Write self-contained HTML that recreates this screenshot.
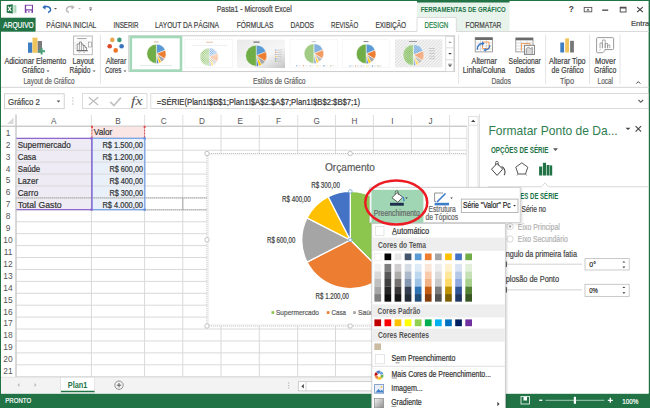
<!DOCTYPE html><html><head><meta charset="utf-8"><style>html,body{margin:0;padding:0;background:#fff;overflow:hidden}svg{display:block}text{font-family:"Liberation Sans",sans-serif}</style></head><body>
<svg width="650" height="408" viewBox="0 0 650 408">
<rect x="0" y="0" width="650" height="408" fill="#fff" />
<path d="M6.7,5 L12.8,4.2 V13.6 L6.7,12.8 Z" fill="#1e7044" />
<rect x="12.8" y="5.1" width="3.6" height="7.6" fill="#a9d6b9" />
<line x1="13.9" y1="5.3" x2="13.9" y2="12.5" stroke="#fff" stroke-width="0.6" />
<path d="M8.1,6.6 L11.2,11.1 M11.2,6.6 L8.1,11.1" fill="none" stroke="#fff" stroke-width="1.1" />
<rect x="24.8" y="4.8" width="8.2" height="8.1" fill="#7b3fa6" />
<rect x="26.1" y="5.7" width="5.8" height="3.6" fill="#fff" />
<rect x="26.5" y="10.5" width="5" height="2.4" fill="#fff" />
<rect x="28.4" y="10.9" width="1.1" height="1.6" fill="#7b3fa6" />
<path d="M44,7 q5,-1.5 6.5,2 q0.5,2.5 -2.5,3.5" fill="none" stroke="#2e6bb8" stroke-width="1.4" />
<path d="M42.3,7.2 l3.2,-2.5 v5 z" fill="#2e6bb8" />
<path d="M54,8 h3 l-1.5,1.6z" fill="#555" />
<path d="M73,7 q-5,-1.5 -6.5,2 q-0.5,2.5 2.5,3.5" fill="none" stroke="#b8b8b8" stroke-width="1.4" />
<path d="M74.7,7.2 l-3.2,-2.5 v5 z" fill="#b8b8b8" />
<path d="M78,8 h3 l-1.5,1.6z" fill="#bbb" />
<rect x="89.3" y="7.5" width="2.6" height="0.9" fill="#555" />
<path d="M89.2,9.3 h2.8 l-1.4,1.5z" fill="#555" />
<text x="216.7" y="12.3" font-size="8.87" fill="#444" stroke="#444" stroke-width="0.2" textLength="75" lengthAdjust="spacingAndGlyphs" >Pasta1 - Microsoft Excel</text>
<rect x="417" y="0" width="92.5" height="31" fill="#e8f3eb" />
<rect x="417" y="0" width="92.5" height="2.5" fill="#217346" />
<text x="420.7" y="12.1" font-size="6.98" fill="#217346" font-weight="600" textLength="85" lengthAdjust="spacingAndGlyphs" >FERRAMENTAS DE GRÁFICO</text>
<text x="568.8" y="11.9" font-size="8.4" font-weight="700" fill="#444">?</text>
<rect x="584.2" y="7.4" width="7.6" height="4.4" fill="none" stroke="#555" stroke-width="0.9"/>
<path d="M586.3,10.4 l1.7,-1.8 l1.7,1.8z" fill="#555" />
<rect x="602.2" y="9.5" width="6" height="1.3" fill="#444" />
<rect x="620.2" y="7.2" width="5.8" height="4.8" fill="none" stroke="#444" stroke-width="0.9"/>
<rect x="620.2" y="7.2" width="5.8" height="1.3" fill="#444" />
<path d="M637.2,7.2 L642.8,12 M642.8,7.2 L637.2,12" fill="none" stroke="#444" stroke-width="1.1" />
<text x="630.9" y="25.6" font-size="7.56" fill="#444" stroke="#444" stroke-width="0.2" textLength="21" lengthAdjust="spacingAndGlyphs" >Entrar</text>
<rect x="0" y="0" width="650" height="1" fill="#217346" />
<rect x="0" y="0" width="1" height="408" fill="#217346" />
<rect x="648.6" y="0" width="1.4" height="408" fill="#217346" />
<rect x="0" y="17.7" width="35.6" height="14" fill="#217346" />
<text x="3.3" y="27.7" font-size="8.28" fill="#fff" stroke="#fff" stroke-width="0.2" textLength="30.4" lengthAdjust="spacingAndGlyphs" >ARQUIVO</text>
<text x="46.3" y="27.7" font-size="8.28" fill="#444" stroke="#444" stroke-width="0.2" textLength="50" lengthAdjust="spacingAndGlyphs" >PÁGINA INICIAL</text>
<text x="113.5" y="27.7" font-size="8.28" fill="#444" stroke="#444" stroke-width="0.2" textLength="25" lengthAdjust="spacingAndGlyphs" >INSERIR</text>
<text x="155" y="27.7" font-size="8.28" fill="#444" stroke="#444" stroke-width="0.2" textLength="64" lengthAdjust="spacingAndGlyphs" >LAYOUT DA PÁGINA</text>
<text x="236.8" y="27.7" font-size="8.28" fill="#444" stroke="#444" stroke-width="0.2" textLength="36.5" lengthAdjust="spacingAndGlyphs" >FÓRMULAS</text>
<text x="290.5" y="27.7" font-size="8.28" fill="#444" stroke="#444" stroke-width="0.2" textLength="23.5" lengthAdjust="spacingAndGlyphs" >DADOS</text>
<text x="331" y="27.7" font-size="8.28" fill="#444" stroke="#444" stroke-width="0.2" textLength="27.2" lengthAdjust="spacingAndGlyphs" >REVISÃO</text>
<text x="375.4" y="27.7" font-size="8.28" fill="#444" stroke="#444" stroke-width="0.2" textLength="30.8" lengthAdjust="spacingAndGlyphs" >EXIBIÇÃO</text>
<rect x="417" y="17.5" width="39.3" height="15" fill="#fff" />
<path d="M417,32 V17.5 H456.3 V32" fill="none" stroke="#d4d4d4" stroke-width="0.8" />
<text x="424.4" y="27.7" font-size="8.28" fill="#1e8544" stroke="#1e8544" stroke-width="0.2" textLength="24" lengthAdjust="spacingAndGlyphs" >DESIGN</text>
<text x="465.5" y="27.7" font-size="8.28" fill="#444" stroke="#444" stroke-width="0.2" textLength="35.8" lengthAdjust="spacingAndGlyphs" >FORMATAR</text>
<line x1="35.6" y1="31.5" x2="417" y2="31.5" stroke="#d6d6d6" stroke-width="0.9" />
<line x1="456.3" y1="31.5" x2="649" y2="31.5" stroke="#d6d6d6" stroke-width="0.9" />
<rect x="417.4" y="31" width="38.5" height="1.5" fill="#fff" />
<line x1="1" y1="87.3" x2="649" y2="87.3" stroke="#d4d4d4" stroke-width="1" />
<line x1="100.4" y1="34.5" x2="100.4" y2="84" stroke="#e1e1e1" stroke-width="0.9" />
<line x1="458.6" y1="34.5" x2="458.6" y2="84" stroke="#e1e1e1" stroke-width="0.9" />
<line x1="545.6" y1="34.5" x2="545.6" y2="84" stroke="#e1e1e1" stroke-width="0.9" />
<line x1="589.6" y1="34.5" x2="589.6" y2="84" stroke="#e1e1e1" stroke-width="0.9" />
<line x1="620" y1="34.5" x2="620" y2="84" stroke="#e1e1e1" stroke-width="0.9" />
<rect x="28" y="42.5" width="4.3" height="10.3" fill="#3d7fc2" />
<rect x="32.5" y="37.6" width="5" height="15.2" fill="#f2c55c" />
<rect x="37.7" y="41" width="4.3" height="11.8" fill="#7b7b7b" />
<path d="M41.6,47.8 v6.8 M38.2,51.2 h6.8" fill="none" stroke="#4aa27a" stroke-width="2" />
<text x="4.4" y="64" font-size="8.14" fill="#444" stroke="#444" stroke-width="0.2" textLength="61.8" lengthAdjust="spacingAndGlyphs" >Adicionar Elemento</text>
<text x="22" y="73.4" font-size="8.14" fill="#444" stroke="#444" stroke-width="0.2" textLength="22.5" lengthAdjust="spacingAndGlyphs" >Gráfico</text>
<path d="M46.5,70.6 h3 l-1.5,1.5z" fill="#555" />
<text x="23.5" y="84.4" font-size="8.14" fill="#666" stroke="#666" stroke-width="0.2" textLength="51" lengthAdjust="spacingAndGlyphs" >Layout de Gráfico</text>
<rect x="73.6" y="36" width="18.7" height="18.7" fill="#fff" stroke="#b4b4b4" stroke-width="0.9"/>
<line x1="77.2" y1="38.6" x2="86.6" y2="38.6" stroke="#8a8a8a" stroke-width="0.8" />
<line x1="76.3" y1="41" x2="88" y2="41" stroke="#e0e0e0" stroke-width="0.5" />
<line x1="76.3" y1="43.5" x2="88" y2="43.5" stroke="#e0e0e0" stroke-width="0.5" />
<line x1="76.3" y1="46" x2="88" y2="46" stroke="#e0e0e0" stroke-width="0.5" />
<line x1="76.3" y1="48.5" x2="88" y2="48.5" stroke="#e0e0e0" stroke-width="0.5" />
<line x1="74.5" y1="43" x2="75.8" y2="43" stroke="#999" stroke-width="0.5" />
<line x1="74.5" y1="45.5" x2="75.8" y2="45.5" stroke="#999" stroke-width="0.5" />
<line x1="74.5" y1="48" x2="75.8" y2="48" stroke="#999" stroke-width="0.5" />
<path d="M77.2,50.5 V44 H79.5 V42 H81.5 V44 H83 V45.5 H85 V47.5 H86.5 V50.5 Z" fill="#f4f4f4" stroke="#6f6f6f" stroke-width="0.7" />
<line x1="79.5" y1="44" x2="79.5" y2="50.5" stroke="#6f6f6f" stroke-width="0.5" />
<line x1="81.5" y1="44" x2="81.5" y2="50.5" stroke="#6f6f6f" stroke-width="0.5" />
<line x1="83.5" y1="45.5" x2="83.5" y2="50.5" stroke="#6f6f6f" stroke-width="0.5" />
<line x1="76.5" y1="50.8" x2="88" y2="50.8" stroke="#555" stroke-width="0.8" />
<rect x="88.5" y="42" width="2.8" height="5" fill="#fff" stroke="#888" stroke-width="0.6"/>
<line x1="78.5" y1="52.6" x2="80.5" y2="52.6" stroke="#aaa" stroke-width="0.6" />
<line x1="83" y1="52.6" x2="85" y2="52.6" stroke="#aaa" stroke-width="0.6" />
<text x="72.5" y="63.8" font-size="8.14" fill="#444" stroke="#444" stroke-width="0.2" textLength="21.3" lengthAdjust="spacingAndGlyphs" >Layout</text>
<text x="69.6" y="73.4" font-size="8.14" fill="#444" stroke="#444" stroke-width="0.2" textLength="20.8" lengthAdjust="spacingAndGlyphs" >Rápido</text>
<path d="M92.6,70.6 h3 l-1.5,1.5z" fill="#555" />
<circle cx="112.3" cy="39.9" r="2.3" fill="#eaa84e"/>
<circle cx="119.4" cy="39.9" r="2.3" fill="#3f9a7c"/>
<circle cx="109.7" cy="46.3" r="2.3" fill="#dc4a2a"/>
<circle cx="121.6" cy="46.3" r="2.3" fill="#3a72c0"/>
<circle cx="115.7" cy="50.4" r="2.3" fill="#ec7424"/>
<text x="105.9" y="63.8" font-size="8.14" fill="#444" stroke="#444" stroke-width="0.2" textLength="20.3" lengthAdjust="spacingAndGlyphs" >Alterar</text>
<text x="104.9" y="73.4" font-size="8.14" fill="#444" stroke="#444" stroke-width="0.2" textLength="16.5" lengthAdjust="spacingAndGlyphs" >Cores</text>
<path d="M123.5,70.6 h3 l-1.5,1.5z" fill="#555" />
<rect x="128.8" y="35.8" width="325.8" height="35.8" fill="#fff" stroke="#c6c6c6" stroke-width="0.9"/>
<rect x="130.8" y="37" width="50.2" height="33.6" fill="#fff" stroke="#a3d9b9" stroke-width="2.6"/>
<path d="M156.4,53.8 L156.40,44.20 A9.6,9.6 0 0 1 165.27,50.13 Z" fill="#5b9bd5" stroke="#fff" stroke-width="0.5" stroke-linejoin="round"/>
<path d="M156.4,53.8 L165.27,50.13 A9.6,9.6 0 0 1 164.59,58.82 Z" fill="#ed7d31" stroke="#fff" stroke-width="0.5" stroke-linejoin="round"/>
<path d="M156.4,53.8 L164.59,58.82 A9.6,9.6 0 0 1 161.42,61.99 Z" fill="#a5a5a5" stroke="#fff" stroke-width="0.5" stroke-linejoin="round"/>
<path d="M156.4,53.8 L161.42,61.99 A9.6,9.6 0 0 1 158.64,63.13 Z" fill="#ffc000" stroke="#fff" stroke-width="0.5" stroke-linejoin="round"/>
<path d="M156.4,53.8 L158.64,63.13 A9.6,9.6 0 0 1 156.40,63.40 Z" fill="#4472c4" stroke="#fff" stroke-width="0.5" stroke-linejoin="round"/>
<path d="M156.4,53.8 L156.40,63.40 A9.6,9.6 0 0 1 156.40,44.20 Z" fill="#70ad47" stroke="#fff" stroke-width="0.5" stroke-linejoin="round"/>
<rect x="154" y="41.6" width="4.5" height="0.8" fill="#c8a080" />
<rect x="140" y="65.2" width="32" height="0.7" fill="#dcdcdc" />
<rect x="184.9" y="39.3" width="47.8" height="28.4" fill="#fff" stroke="#dcdcdc" stroke-width="0.6" stroke-dasharray="1,1"/>
<defs><pattern id="hat" width="2" height="2" patternUnits="userSpaceOnUse" patternTransform="rotate(45)"><rect width="2" height="2" fill="#fff"/><rect width="1" height="2" fill="#000" fill-opacity="0.35"/></pattern><pattern id="hat2" width="2.2" height="2.2" patternUnits="userSpaceOnUse" patternTransform="rotate(45)"><rect width="2.2" height="2.2" fill="#f4f4f4"/><rect width="0.8" height="2.2" fill="#dddddd"/></pattern><linearGradient id="g3" x1="0" y1="0" x2="1" y2="1"><stop offset="0" stop-color="#e9e9e9"/><stop offset="0.6" stop-color="#f6f6f6"/><stop offset="1" stop-color="#c4c4c4"/></linearGradient></defs>
<path d="M209.1,57 L209.10,48.00 A9,9 0 0 1 217.41,53.56 Z" fill="#86b3e0" stroke="#fff" stroke-width="0.3" stroke-linejoin="round"/>
<path d="M209.1,57 L217.41,53.56 A9,9 0 0 1 216.77,61.70 Z" fill="#f19c64" stroke="#fff" stroke-width="0.3" stroke-linejoin="round"/>
<path d="M209.1,57 L216.77,61.70 A9,9 0 0 1 213.80,64.67 Z" fill="#bcbcbc" stroke="#fff" stroke-width="0.3" stroke-linejoin="round"/>
<path d="M209.1,57 L213.80,64.67 A9,9 0 0 1 211.20,65.75 Z" fill="#ffcc40" stroke="#fff" stroke-width="0.3" stroke-linejoin="round"/>
<path d="M209.1,57 L211.20,65.75 A9,9 0 0 1 209.10,66.00 Z" fill="#6f93d2" stroke="#fff" stroke-width="0.3" stroke-linejoin="round"/>
<path d="M209.1,57 L209.10,66.00 A9,9 0 0 1 209.10,48.00 Z" fill="#8fc26a" stroke="#fff" stroke-width="0.3" stroke-linejoin="round"/>
<defs><pattern id="xh" width="1.6" height="1.6" patternUnits="userSpaceOnUse" patternTransform="rotate(45)"><rect width="1.6" height="0.6" fill="#fff"/><rect width="0.6" height="1.6" fill="#fff"/></pattern></defs>
<circle cx="209.1" cy="57" r="9.2" fill="url(#xh)" fill-opacity="0.8"/>
<rect x="206" y="41.8" width="7" height="0.8" fill="#e0b090" />
<rect x="192" y="45.3" width="35" height="0.6" fill="#e4e4e4" />
<rect x="237" y="39.6" width="48" height="28.4" fill="url(#g3)" />
<path d="M256.2,55.7 L256.20,45.20 A10.5,10.5 0 0 1 265.90,51.68 Z" fill="#5b9bd5" stroke="#fff" stroke-width="0.4" stroke-linejoin="round"/>
<path d="M256.2,55.7 L265.90,51.68 A10.5,10.5 0 0 1 265.15,61.19 Z" fill="#ed7d31" stroke="#fff" stroke-width="0.4" stroke-linejoin="round"/>
<path d="M256.2,55.7 L265.15,61.19 A10.5,10.5 0 0 1 261.69,64.65 Z" fill="#a5a5a5" stroke="#fff" stroke-width="0.4" stroke-linejoin="round"/>
<path d="M256.2,55.7 L261.69,64.65 A10.5,10.5 0 0 1 258.65,65.91 Z" fill="#ffc000" stroke="#fff" stroke-width="0.4" stroke-linejoin="round"/>
<path d="M256.2,55.7 L258.65,65.91 A10.5,10.5 0 0 1 256.20,66.20 Z" fill="#4472c4" stroke="#fff" stroke-width="0.4" stroke-linejoin="round"/>
<path d="M256.2,55.7 L256.20,66.20 A10.5,10.5 0 0 1 256.20,45.20 Z" fill="#70ad47" stroke="#fff" stroke-width="0.4" stroke-linejoin="round"/>
<rect x="275.2" y="49.5" width="1.1" height="1.1" fill="#5b9bd5" />
<rect x="276.8" y="49.7" width="5" height="0.7" fill="#c4c4c4" />
<rect x="275.2" y="51.7" width="1.1" height="1.1" fill="#ed7d31" />
<rect x="276.8" y="51.900000000000006" width="5" height="0.7" fill="#c4c4c4" />
<rect x="275.2" y="53.9" width="1.1" height="1.1" fill="#a5a5a5" />
<rect x="276.8" y="54.1" width="5" height="0.7" fill="#c4c4c4" />
<rect x="275.2" y="56.1" width="1.1" height="1.1" fill="#ffc000" />
<rect x="276.8" y="56.300000000000004" width="5" height="0.7" fill="#c4c4c4" />
<rect x="275.2" y="58.3" width="1.1" height="1.1" fill="#4472c4" />
<rect x="276.8" y="58.5" width="5" height="0.7" fill="#c4c4c4" />
<rect x="275.2" y="60.5" width="1.1" height="1.1" fill="#70ad47" />
<rect x="276.8" y="60.7" width="5" height="0.7" fill="#c4c4c4" />
<rect x="253.5" y="41.6" width="6" height="1" fill="#555" />
<rect x="290" y="39.5" width="47.5" height="28.5" fill="#fff" stroke="#e6e6e6" stroke-width="0.6" stroke-dasharray="1,1"/>
<path d="M313.9,53.6 L313.90,43.80 A9.8,9.8 0 0 1 322.95,49.85 Z" fill="#84b1dd" stroke="#fff" stroke-width="0.5" stroke-linejoin="round"/>
<path d="M313.9,53.6 L322.95,49.85 A9.8,9.8 0 0 1 322.26,58.72 Z" fill="#f19a62" stroke="#fff" stroke-width="0.5" stroke-linejoin="round"/>
<path d="M313.9,53.6 L322.26,58.72 A9.8,9.8 0 0 1 319.02,61.96 Z" fill="#bcbcbc" stroke="#fff" stroke-width="0.5" stroke-linejoin="round"/>
<path d="M313.9,53.6 L319.02,61.96 A9.8,9.8 0 0 1 316.19,63.13 Z" fill="#ffce40" stroke="#fff" stroke-width="0.5" stroke-linejoin="round"/>
<path d="M313.9,53.6 L316.19,63.13 A9.8,9.8 0 0 1 313.90,63.40 Z" fill="#6a8fd0" stroke="#fff" stroke-width="0.5" stroke-linejoin="round"/>
<path d="M313.9,53.6 L313.90,63.40 A9.8,9.8 0 0 1 313.90,43.80 Z" fill="#a2cc84" stroke="#fff" stroke-width="0.5" stroke-linejoin="round"/>
<rect x="296.0" y="65.3" width="1.3" height="1.1" fill="#84b1dd" />
<rect x="297.8" y="65.6" width="3" height="0.6" fill="#ddd" />
<rect x="302.8" y="65.3" width="1.3" height="1.1" fill="#f19a62" />
<rect x="304.6" y="65.6" width="3" height="0.6" fill="#ddd" />
<rect x="309.6" y="65.3" width="1.3" height="1.1" fill="#bcbcbc" />
<rect x="311.40000000000003" y="65.6" width="3" height="0.6" fill="#ddd" />
<rect x="316.4" y="65.3" width="1.3" height="1.1" fill="#ffce40" />
<rect x="318.2" y="65.6" width="3" height="0.6" fill="#ddd" />
<rect x="323.2" y="65.3" width="1.3" height="1.1" fill="#6a8fd0" />
<rect x="325.0" y="65.6" width="3" height="0.6" fill="#ddd" />
<rect x="330.0" y="65.3" width="1.3" height="1.1" fill="#a2cc84" />
<rect x="331.8" y="65.6" width="3" height="0.6" fill="#ddd" />
<rect x="311.5" y="41.3" width="4.5" height="0.8" fill="#bbb" />
<rect x="342.2" y="39.4" width="47.2" height="28" fill="#fff" stroke="#e6e6e6" stroke-width="0.6" stroke-dasharray="1,1"/>
<path d="M366.1,53.9 L366.10,44.10 A9.8,9.8 0 0 1 375.15,50.15 Z" fill="#5b9bd5" stroke="#fff" stroke-width="0.5" stroke-linejoin="round"/>
<path d="M366.1,53.9 L375.15,50.15 A9.8,9.8 0 0 1 374.46,59.02 Z" fill="#ed7d31" stroke="#fff" stroke-width="0.5" stroke-linejoin="round"/>
<path d="M366.1,53.9 L374.46,59.02 A9.8,9.8 0 0 1 371.22,62.26 Z" fill="#a5a5a5" stroke="#fff" stroke-width="0.5" stroke-linejoin="round"/>
<path d="M366.1,53.9 L371.22,62.26 A9.8,9.8 0 0 1 368.39,63.43 Z" fill="#ffc000" stroke="#fff" stroke-width="0.5" stroke-linejoin="round"/>
<path d="M366.1,53.9 L368.39,63.43 A9.8,9.8 0 0 1 366.10,63.70 Z" fill="#4472c4" stroke="#fff" stroke-width="0.5" stroke-linejoin="round"/>
<path d="M366.1,53.9 L366.10,63.70 A9.8,9.8 0 0 1 366.10,44.10 Z" fill="#70ad47" stroke="#fff" stroke-width="0.5" stroke-linejoin="round"/>
<rect x="349.5" y="65.5" width="1" height="1" fill="#5b9bd5" />
<rect x="350.8" y="65.6" width="3" height="0.7" fill="#d8d8d8" />
<rect x="355.1" y="65.5" width="1" height="1" fill="#ed7d31" />
<rect x="356.40000000000003" y="65.6" width="3" height="0.7" fill="#d8d8d8" />
<rect x="360.7" y="65.5" width="1" height="1" fill="#a5a5a5" />
<rect x="362.0" y="65.6" width="3" height="0.7" fill="#d8d8d8" />
<rect x="366.3" y="65.5" width="1" height="1" fill="#ffc000" />
<rect x="367.6" y="65.6" width="3" height="0.7" fill="#d8d8d8" />
<rect x="371.9" y="65.5" width="1" height="1" fill="#4472c4" />
<rect x="373.2" y="65.6" width="3" height="0.7" fill="#d8d8d8" />
<rect x="377.5" y="65.5" width="1" height="1" fill="#70ad47" />
<rect x="378.8" y="65.6" width="3" height="0.7" fill="#d8d8d8" />
<rect x="363.5" y="41.2" width="5" height="0.9" fill="#777" />
<rect x="395" y="39.4" width="47.4" height="28" fill="url(#hat2)" />
<path d="M413.4,55 L413.40,44.50 A10.5,10.5 0 0 1 423.10,50.98 Z" fill="#6fa6dc" stroke="#fff" stroke-width="0.5" stroke-linejoin="round"/>
<path d="M413.4,55 L423.10,50.98 A10.5,10.5 0 0 1 422.35,60.49 Z" fill="#f08c50" stroke="#fff" stroke-width="0.5" stroke-linejoin="round"/>
<path d="M413.4,55 L422.35,60.49 A10.5,10.5 0 0 1 418.89,63.95 Z" fill="#b0b0b0" stroke="#fff" stroke-width="0.5" stroke-linejoin="round"/>
<path d="M413.4,55 L418.89,63.95 A10.5,10.5 0 0 1 415.85,65.21 Z" fill="#ffc830" stroke="#fff" stroke-width="0.5" stroke-linejoin="round"/>
<path d="M413.4,55 L415.85,65.21 A10.5,10.5 0 0 1 413.40,65.50 Z" fill="#5a82cc" stroke="#fff" stroke-width="0.5" stroke-linejoin="round"/>
<path d="M413.4,55 L413.40,65.50 A10.5,10.5 0 0 1 413.40,44.50 Z" fill="#82bb5c" stroke="#fff" stroke-width="0.5" stroke-linejoin="round"/>
<circle cx="413.4" cy="55" r="10.6" fill="url(#xh)" fill-opacity="0.45"/>
<rect x="429" y="48.0" width="6" height="0.7" fill="#bbb" />
<rect x="429" y="50.6" width="6" height="0.7" fill="#bbb" />
<rect x="429" y="53.2" width="6" height="0.7" fill="#bbb" />
<rect x="429" y="55.8" width="6" height="0.7" fill="#bbb" />
<rect x="429" y="58.4" width="6" height="0.7" fill="#bbb" />
<rect x="409" y="41" width="8" height="0.8" fill="#888" />
<rect x="445.8" y="36.5" width="8" height="35" fill="#fff" stroke="#d0d0d0" stroke-width="0.7"/>
<line x1="445.8" y1="47.8" x2="453.8" y2="47.8" stroke="#d0d0d0" stroke-width="0.7" />
<line x1="445.8" y1="59.8" x2="453.8" y2="59.8" stroke="#d0d0d0" stroke-width="0.7" />
<path d="M448.3,43 l1.7,-1.8 l1.7,1.8z" fill="#999" />
<path d="M448.2,53 h3.6 l-1.8,1.8z" fill="#444" />
<rect x="448.2" y="63.8" width="3.6" height="0.7" fill="#444" />
<path d="M448.2,65.3 h3.6 l-1.8,1.8z" fill="#444" />
<text x="253" y="84.4" font-size="8.14" fill="#666" stroke="#666" stroke-width="0.2" textLength="52.6" lengthAdjust="spacingAndGlyphs" >Estilos de Gráfico</text>
<rect x="475.2" y="37.6" width="17.3" height="14.3" fill="#fff" stroke="#8a8a8a" stroke-width="0.8"/>
<rect x="475.2" y="37.6" width="17.3" height="2.4" fill="#6a6a6a" />
<line x1="475.2" y1="43" x2="492.5" y2="43" stroke="#c4c4c4" stroke-width="0.6" />
<line x1="475.2" y1="46" x2="492.5" y2="46" stroke="#c4c4c4" stroke-width="0.6" />
<line x1="475.2" y1="49" x2="492.5" y2="49" stroke="#c4c4c4" stroke-width="0.6" />
<line x1="480.5" y1="40" x2="480.5" y2="51.9" stroke="#c4c4c4" stroke-width="0.6" />
<line x1="486.5" y1="40" x2="486.5" y2="51.9" stroke="#c4c4c4" stroke-width="0.6" />
<path d="M482.5,42 h6.5 v6.5 h-6.5 z" fill="none" stroke="#f0a060" stroke-width="1" />
<path d="M477.3,49.8 q0,-6 5.2,-6.3" fill="none" stroke="#3a78c4" stroke-width="1.3" />
<path d="M482,41.3 l2.6,2.2 l-2.6,2.2z" fill="#3a78c4" />
<path d="M489.8,45 q0,4.5 -4.5,5" fill="none" stroke="#3a78c4" stroke-width="1.2" />
<path d="M485.8,48 l-2.4,2 l2.4,2z" fill="#3a78c4" />
<text x="471.6" y="63.8" font-size="8.14" fill="#444" stroke="#444" stroke-width="0.2" textLength="25.2" lengthAdjust="spacingAndGlyphs" >Alternar</text>
<text x="462.8" y="73.4" font-size="8.14" fill="#444" stroke="#444" stroke-width="0.2" textLength="42.6" lengthAdjust="spacingAndGlyphs" >Linha/Coluna</text>
<text x="491.5" y="84.4" font-size="8.14" fill="#666" stroke="#666" stroke-width="0.2" textLength="19.5" lengthAdjust="spacingAndGlyphs" >Dados</text>
<rect x="515.8" y="37.9" width="17.2" height="14" fill="#fff" stroke="#8a8a8a" stroke-width="0.8"/>
<rect x="515.8" y="37.9" width="17.2" height="2.4" fill="#6a6a6a" />
<line x1="515.8" y1="43" x2="533" y2="43" stroke="#c4c4c4" stroke-width="0.6" />
<line x1="515.8" y1="46" x2="533" y2="46" stroke="#c4c4c4" stroke-width="0.6" />
<line x1="515.8" y1="49" x2="533" y2="49" stroke="#c4c4c4" stroke-width="0.6" />
<line x1="521" y1="40.3" x2="521" y2="51.9" stroke="#c4c4c4" stroke-width="0.6" />
<line x1="527" y1="40.3" x2="527" y2="51.9" stroke="#c4c4c4" stroke-width="0.6" />
<path d="M521.5,50.5 v-7 h8.5 v2" fill="none" stroke="#f0a060" stroke-width="1" />
<rect x="524.6" y="45.3" width="9.8" height="9.3" fill="#fff" stroke="#777" stroke-width="0.9"/>
<path d="M526.3,54 v-5 l2,-2 l2,1.5 l2,-1 v6.5" fill="#d8d8d8" stroke="#777" stroke-width="0.7" />
<text x="508.6" y="63.8" font-size="8.14" fill="#444" stroke="#444" stroke-width="0.2" textLength="32.2" lengthAdjust="spacingAndGlyphs" >Selecionar</text>
<text x="515.5" y="73.4" font-size="8.14" fill="#444" stroke="#444" stroke-width="0.2" textLength="19" lengthAdjust="spacingAndGlyphs" >Dados</text>
<rect x="560.3" y="42.5" width="3.8" height="10" fill="#3d7fc2" />
<rect x="565.2" y="38.3" width="3.8" height="14.2" fill="#f2c55c" />
<rect x="570.1" y="40.8" width="3.8" height="11.7" fill="#777" />
<text x="549" y="63.8" font-size="8.14" fill="#444" stroke="#444" stroke-width="0.2" textLength="36.6" lengthAdjust="spacingAndGlyphs" >Alterar Tipo</text>
<text x="551.6" y="73.4" font-size="8.14" fill="#444" stroke="#444" stroke-width="0.2" textLength="32" lengthAdjust="spacingAndGlyphs" >de Gráfico</text>
<text x="560" y="84.4" font-size="8.14" fill="#666" stroke="#666" stroke-width="0.2" textLength="14" lengthAdjust="spacingAndGlyphs" >Tipo</text>
<path d="M604.5,49.6 H612.6 q1,0 1,-1 V38.6 q0,-1 -1,-1 H597.6 q-1,0 -1,1 V51.8 q0,0.9 0.9,0.9 H602.8 L605.5,50" fill="none" stroke="#8f8f8f" stroke-width="0.9" />
<path d="M600,48.2 V43 H602.4 V48.2 M602.4,48.2 V40 H605.2 V48.2 M605.2,48.2 V43.5 H607.6 V48.2 M607.6,48.2 V45 H609.8 V48.2" fill="none" stroke="#8f8f8f" stroke-width="0.75" />
<path d="M599,50.5 l2,-1.5" fill="none" stroke="#aaa" stroke-width="0.6" />
<text x="595" y="63.8" font-size="8.14" fill="#444" stroke="#444" stroke-width="0.2" textLength="20.6" lengthAdjust="spacingAndGlyphs" >Mover</text>
<text x="594" y="73.4" font-size="8.14" fill="#444" stroke="#444" stroke-width="0.2" textLength="22.4" lengthAdjust="spacingAndGlyphs" >Gráfico</text>
<text x="597.6" y="84.4" font-size="8.14" fill="#666" stroke="#666" stroke-width="0.2" textLength="15.4" lengthAdjust="spacingAndGlyphs" >Local</text>
<path d="M636.3,83.6 l2,-2 l2,2" fill="none" stroke="#444" stroke-width="1" />
<rect x="4.4" y="93.8" width="59.8" height="14.9" fill="#fff" stroke="#c6c6c6" stroke-width="0.8"/>
<text x="8" y="104.5" font-size="8.58" fill="#444" stroke="#444" stroke-width="0.2" textLength="32" lengthAdjust="spacingAndGlyphs" >Gráfico 2</text>
<path d="M56.6,100.4 h3.8 l-1.9,2.1z" fill="#555" />
<rect x="72.4" y="97.5" width="1" height="1" fill="#999" />
<rect x="72.4" y="100.5" width="1" height="1" fill="#999" />
<rect x="72.4" y="103.5" width="1" height="1" fill="#999" />
<rect x="82.5" y="93.6" width="64.5" height="15" fill="#fff" stroke="#d4d4d4" stroke-width="0.8"/>
<path d="M88.8,97.2 l9.4,7.8 M98.2,97.2 l-9.4,7.8" fill="none" stroke="#bdbdbd" stroke-width="1.2" />
<path d="M110.3,101.8 l3.6,3.8 l7,-8" fill="none" stroke="#c2c2c2" stroke-width="1.7" />
<text x="131" y="105.2" style="font-family:'Liberation Serif',serif;font-style:italic" font-size="12.8" fill="#555" textLength="11.5" lengthAdjust="spacingAndGlyphs">fx</text>
<rect x="150.8" y="93.4" width="497.5" height="15.1" fill="#fff" stroke="#d4d4d4" stroke-width="0.8"/>
<text x="156.8" y="104.5" font-size="8.72" fill="#333" stroke="#333" stroke-width="0.2" textLength="203.3" lengthAdjust="spacingAndGlyphs" >=SÉRIE(Plan1!$B$1;Plan1!$A$2:$A$7;Plan1!$B$2:$B$7;1)</text>
<path d="M638.5,100 l2.3,2.3 l2.3,-2.3" fill="none" stroke="#555" stroke-width="1.1" />
<rect x="1" y="114.5" width="466" height="12" fill="#fff" />
<line x1="1" y1="126.2" x2="467" y2="126.2" stroke="#ababab" stroke-width="0.9" />
<line x1="91.4" y1="115" x2="91.4" y2="126" stroke="#d8d8d8" stroke-width="0.8" />
<line x1="144.6" y1="115" x2="144.6" y2="126" stroke="#d8d8d8" stroke-width="0.8" />
<line x1="182.8" y1="115" x2="182.8" y2="126" stroke="#d8d8d8" stroke-width="0.8" />
<line x1="221" y1="115" x2="221" y2="126" stroke="#d8d8d8" stroke-width="0.8" />
<line x1="259.3" y1="115" x2="259.3" y2="126" stroke="#d8d8d8" stroke-width="0.8" />
<line x1="297.7" y1="115" x2="297.7" y2="126" stroke="#d8d8d8" stroke-width="0.8" />
<line x1="335.5" y1="115" x2="335.5" y2="126" stroke="#d8d8d8" stroke-width="0.8" />
<line x1="373.4" y1="115" x2="373.4" y2="126" stroke="#d8d8d8" stroke-width="0.8" />
<line x1="411.4" y1="115" x2="411.4" y2="126" stroke="#d8d8d8" stroke-width="0.8" />
<line x1="449.6" y1="115" x2="449.6" y2="126" stroke="#d8d8d8" stroke-width="0.8" />
<line x1="16" y1="114.5" x2="16" y2="377" stroke="#c8c8c8" stroke-width="0.9" />
<path d="M13.5,124 v-6.5 l-6.5,6.5z" fill="#d9d9d9" />
<text x="53.7" y="123.7" font-size="8.2" fill="#555" text-anchor="middle">A</text>
<text x="118.0" y="123.7" font-size="8.2" fill="#555" text-anchor="middle">B</text>
<text x="163.7" y="123.7" font-size="8.2" fill="#555" text-anchor="middle">C</text>
<text x="201.9" y="123.7" font-size="8.2" fill="#555" text-anchor="middle">D</text>
<text x="240.2" y="123.7" font-size="8.2" fill="#555" text-anchor="middle">E</text>
<text x="278.5" y="123.7" font-size="8.2" fill="#555" text-anchor="middle">F</text>
<text x="316.6" y="123.7" font-size="8.2" fill="#555" text-anchor="middle">G</text>
<text x="354.4" y="123.7" font-size="8.2" fill="#555" text-anchor="middle">H</text>
<text x="392.4" y="123.7" font-size="8.2" fill="#555" text-anchor="middle">I</text>
<text x="430.5" y="123.7" font-size="8.2" fill="#555" text-anchor="middle">J</text>
<rect x="16.5" y="138.3" width="75" height="71.4" fill="#eeebf4" />
<rect x="91.9" y="138.3" width="52.7" height="71.4" fill="#e9f0fa" />
<rect x="92" y="126.6" width="52.5" height="11.6" fill="#fbe6e6" />
<line x1="16" y1="138.32" x2="467" y2="138.32" stroke="#d9d9d9" stroke-width="1" />
<line x1="16" y1="150.24" x2="467" y2="150.24" stroke="#d9d9d9" stroke-width="1" />
<line x1="16" y1="162.16" x2="467" y2="162.16" stroke="#d9d9d9" stroke-width="1" />
<line x1="16" y1="174.08" x2="467" y2="174.08" stroke="#d9d9d9" stroke-width="1" />
<line x1="16" y1="186.0" x2="467" y2="186.0" stroke="#d9d9d9" stroke-width="1" />
<line x1="16" y1="197.92000000000002" x2="467" y2="197.92000000000002" stroke="#d9d9d9" stroke-width="1" />
<line x1="16" y1="209.84" x2="467" y2="209.84" stroke="#d9d9d9" stroke-width="1" />
<line x1="16" y1="221.76" x2="467" y2="221.76" stroke="#d9d9d9" stroke-width="1" />
<line x1="16" y1="233.68" x2="467" y2="233.68" stroke="#d9d9d9" stroke-width="1" />
<line x1="16" y1="245.60000000000002" x2="467" y2="245.60000000000002" stroke="#d9d9d9" stroke-width="1" />
<line x1="16" y1="257.52" x2="467" y2="257.52" stroke="#d9d9d9" stroke-width="1" />
<line x1="16" y1="269.44" x2="467" y2="269.44" stroke="#d9d9d9" stroke-width="1" />
<line x1="16" y1="281.36" x2="467" y2="281.36" stroke="#d9d9d9" stroke-width="1" />
<line x1="16" y1="293.28" x2="467" y2="293.28" stroke="#d9d9d9" stroke-width="1" />
<line x1="16" y1="305.20000000000005" x2="467" y2="305.20000000000005" stroke="#d9d9d9" stroke-width="1" />
<line x1="16" y1="317.12" x2="467" y2="317.12" stroke="#d9d9d9" stroke-width="1" />
<line x1="16" y1="329.03999999999996" x2="467" y2="329.03999999999996" stroke="#d9d9d9" stroke-width="1" />
<line x1="16" y1="340.96000000000004" x2="467" y2="340.96000000000004" stroke="#d9d9d9" stroke-width="1" />
<line x1="16" y1="352.88" x2="467" y2="352.88" stroke="#d9d9d9" stroke-width="1" />
<line x1="16" y1="364.8" x2="467" y2="364.8" stroke="#d9d9d9" stroke-width="1" />
<line x1="16" y1="376.72" x2="467" y2="376.72" stroke="#d9d9d9" stroke-width="1" />
<line x1="91.4" y1="126.4" x2="91.4" y2="377" stroke="#d9d9d9" stroke-width="1" />
<line x1="144.6" y1="126.4" x2="144.6" y2="377" stroke="#d9d9d9" stroke-width="1" />
<line x1="182.8" y1="126.4" x2="182.8" y2="377" stroke="#d9d9d9" stroke-width="1" />
<line x1="221" y1="126.4" x2="221" y2="377" stroke="#d9d9d9" stroke-width="1" />
<line x1="259.3" y1="126.4" x2="259.3" y2="377" stroke="#d9d9d9" stroke-width="1" />
<line x1="297.7" y1="126.4" x2="297.7" y2="377" stroke="#d9d9d9" stroke-width="1" />
<line x1="335.5" y1="126.4" x2="335.5" y2="377" stroke="#d9d9d9" stroke-width="1" />
<line x1="373.4" y1="126.4" x2="373.4" y2="377" stroke="#d9d9d9" stroke-width="1" />
<line x1="411.4" y1="126.4" x2="411.4" y2="377" stroke="#d9d9d9" stroke-width="1" />
<line x1="449.6" y1="126.4" x2="449.6" y2="377" stroke="#d9d9d9" stroke-width="1" />
<text x="8" y="135.7" font-size="8.4" fill="#555" text-anchor="middle">1</text>
<text x="8" y="147.6" font-size="8.4" fill="#555" text-anchor="middle">2</text>
<text x="8" y="159.5" font-size="8.4" fill="#555" text-anchor="middle">3</text>
<text x="8" y="171.5" font-size="8.4" fill="#555" text-anchor="middle">4</text>
<text x="8" y="183.4" font-size="8.4" fill="#555" text-anchor="middle">5</text>
<text x="8" y="195.3" font-size="8.4" fill="#555" text-anchor="middle">6</text>
<text x="8" y="207.2" font-size="8.4" fill="#555" text-anchor="middle">7</text>
<text x="8" y="219.1" font-size="8.4" fill="#555" text-anchor="middle">8</text>
<text x="8" y="231.1" font-size="8.4" fill="#555" text-anchor="middle">9</text>
<text x="8" y="243.0" font-size="8.4" fill="#555" text-anchor="middle">10</text>
<text x="8" y="254.9" font-size="8.4" fill="#555" text-anchor="middle">11</text>
<text x="8" y="266.8" font-size="8.4" fill="#555" text-anchor="middle">12</text>
<text x="8" y="278.7" font-size="8.4" fill="#555" text-anchor="middle">13</text>
<text x="8" y="290.7" font-size="8.4" fill="#555" text-anchor="middle">14</text>
<text x="8" y="302.6" font-size="8.4" fill="#555" text-anchor="middle">15</text>
<text x="8" y="314.5" font-size="8.4" fill="#555" text-anchor="middle">16</text>
<text x="8" y="326.4" font-size="8.4" fill="#555" text-anchor="middle">17</text>
<text x="8" y="338.3" font-size="8.4" fill="#555" text-anchor="middle">18</text>
<text x="8" y="350.3" font-size="8.4" fill="#555" text-anchor="middle">19</text>
<text x="8" y="362.2" font-size="8.4" fill="#555" text-anchor="middle">20</text>
<text x="8" y="374.1" font-size="8.4" fill="#555" text-anchor="middle">21</text>
<line x1="16" y1="197.92000000000002" x2="467" y2="197.92000000000002" stroke="#a0a0a0" stroke-width="0.9" stroke-dasharray="1.5,0.5"/>
<line x1="144.6" y1="209.84" x2="467" y2="209.84" stroke="#a0a0a0" stroke-width="0.9" stroke-dasharray="1.5,0.5"/>
<line x1="182.8" y1="197.92000000000002" x2="182.8" y2="209.84" stroke="#a0a0a0" stroke-width="0.9" />
<text x="93.8" y="135.4" font-size="8.43" fill="#333" stroke="#333" stroke-width="0.2" textLength="18.5" lengthAdjust="spacingAndGlyphs" >Valor</text>
<text x="17.7" y="147.9" font-size="8.43" fill="#333" stroke="#333" stroke-width="0.2" textLength="53.2" lengthAdjust="spacingAndGlyphs" >Supermercado</text>
<text x="143" y="147.9" font-size="8.43" fill="#333" stroke="#333" stroke-width="0.2" text-anchor="end" textLength="40.5" lengthAdjust="spacingAndGlyphs" >R$ 1.500,00</text>
<text x="17.7" y="159.82" font-size="8.43" fill="#333" stroke="#333" stroke-width="0.2" textLength="18.6" lengthAdjust="spacingAndGlyphs" >Casa</text>
<text x="143" y="159.82" font-size="8.43" fill="#333" stroke="#333" stroke-width="0.2" text-anchor="end" textLength="40.5" lengthAdjust="spacingAndGlyphs" >R$ 1.200,00</text>
<text x="17.7" y="171.74" font-size="8.43" fill="#333" stroke="#333" stroke-width="0.2" textLength="22.5" lengthAdjust="spacingAndGlyphs" >Saúde</text>
<text x="143" y="171.74" font-size="8.43" fill="#333" stroke="#333" stroke-width="0.2" text-anchor="end" textLength="33.5" lengthAdjust="spacingAndGlyphs" >R$ 600,00</text>
<text x="17.7" y="183.66" font-size="8.43" fill="#333" stroke="#333" stroke-width="0.2" textLength="20.5" lengthAdjust="spacingAndGlyphs" >Lazer</text>
<text x="143" y="183.66" font-size="8.43" fill="#333" stroke="#333" stroke-width="0.2" text-anchor="end" textLength="33.5" lengthAdjust="spacingAndGlyphs" >R$ 400,00</text>
<text x="17.7" y="195.58" font-size="8.43" fill="#333" stroke="#333" stroke-width="0.2" textLength="20.5" lengthAdjust="spacingAndGlyphs" >Carro</text>
<text x="143" y="195.58" font-size="8.43" fill="#333" stroke="#333" stroke-width="0.2" text-anchor="end" textLength="33.5" lengthAdjust="spacingAndGlyphs" >R$ 300,00</text>
<text x="17.7" y="207.5" font-size="8.43" fill="#333" stroke="#333" stroke-width="0.2" textLength="44" lengthAdjust="spacingAndGlyphs" >Total Gasto</text>
<text x="143" y="207.5" font-size="8.43" fill="#333" stroke="#333" stroke-width="0.2" text-anchor="end" textLength="40.5" lengthAdjust="spacingAndGlyphs" >R$ 4.000,00</text>
<rect x="92" y="138.3" width="52.8" height="71.4" fill="none" stroke="#79a2e6" stroke-width="1.3"/>
<path d="M16,138.3 H91.8 V209.7 H16" fill="none" stroke="#8e68cf" stroke-width="1.3" />
<line x1="92" y1="126.5" x2="92" y2="138" stroke="#e24b4b" stroke-width="1" stroke-dasharray="2,1"/>
<line x1="144.6" y1="126.5" x2="144.6" y2="138" stroke="#e24b4b" stroke-width="1" stroke-dasharray="2,1"/>
<rect x="90.4" y="137.2" width="2.2" height="2.2" fill="#8e68cf" />
<rect x="90.4" y="208.6" width="2.2" height="2.2" fill="#8e68cf" />
<rect x="143.5" y="137.2" width="2.2" height="2.2" fill="#5b8fe0" />
<rect x="143.5" y="208.6" width="2.2" height="2.2" fill="#5b8fe0" />
<rect x="91" y="125.8" width="2" height="2" fill="#e24b4b" />
<rect x="143.6" y="125.8" width="2" height="2" fill="#e24b4b" />
<line x1="16" y1="114.5" x2="16" y2="377" stroke="#c8c8c8" stroke-width="1" />
<g clip-path="url(#gridclip)">
<defs><clipPath id="gridclip"><rect x="16" y="126.4" width="451" height="250.6"/></clipPath></defs>
<rect x="207" y="153.5" width="286.4" height="172.5" fill="#fff" stroke="#c4c4c4" stroke-width="1" stroke-dasharray="1.2,0.8"/>
<rect x="208.3" y="154.8" width="283.8" height="169.9" fill="none" stroke="#ececec" stroke-width="0.7"/>
<text x="325" y="170.9" font-size="11.05" fill="#595959" stroke="#595959" stroke-width="0.2" textLength="50" lengthAdjust="spacingAndGlyphs" >Orçamento</text>
<path d="M350.3,240 L350.30,191.40 A48.6,48.6 0 0 1 384.67,274.37 Z" fill="#8dc64e" stroke="#fff" stroke-width="1.3" stroke-linejoin="round"/>
<path d="M350.3,240 L384.67,274.37 A48.6,48.6 0 0 1 307.00,262.06 Z" fill="#ed7d31" stroke="#fff" stroke-width="1.3" stroke-linejoin="round"/>
<path d="M350.3,240 L307.00,262.06 A48.6,48.6 0 0 1 307.00,217.94 Z" fill="#a5a5a5" stroke="#fff" stroke-width="1.3" stroke-linejoin="round"/>
<path d="M350.3,240 L307.00,217.94 A48.6,48.6 0 0 1 328.24,196.70 Z" fill="#ffc000" stroke="#fff" stroke-width="1.3" stroke-linejoin="round"/>
<path d="M350.3,240 L328.24,196.70 A48.6,48.6 0 0 1 350.30,191.40 Z" fill="#4472c4" stroke="#fff" stroke-width="1.3" stroke-linejoin="round"/>
<circle cx="350.3" cy="191.4" r="1.8" fill="#fff" stroke="#6a9bd8" stroke-width="0.8"/>
<circle cx="350.3" cy="240" r="1.8" fill="#fff" stroke="#6a9bd8" stroke-width="0.8"/>
<text x="311.2" y="187.7" font-size="8.14" fill="#404040" stroke="#404040" stroke-width="0.2" textLength="28.7" lengthAdjust="spacingAndGlyphs" >R$ 300,00</text>
<text x="282" y="201.8" font-size="8.14" fill="#404040" stroke="#404040" stroke-width="0.2" textLength="28.8" lengthAdjust="spacingAndGlyphs" >R$ 400,00</text>
<text x="267" y="242.9" font-size="8.14" fill="#404040" stroke="#404040" stroke-width="0.2" textLength="28.3" lengthAdjust="spacingAndGlyphs" >R$ 600,00</text>
<text x="315.6" y="298.7" font-size="8.14" fill="#404040" stroke="#404040" stroke-width="0.2" textLength="33.4" lengthAdjust="spacingAndGlyphs" >R$ 1.200,00</text>
<rect x="271.5" y="311.2" width="2.7" height="2.7" fill="#8dc64e" />
<text x="276" y="314.5" font-size="7.85" fill="#595959" stroke="#595959" stroke-width="0.2" textLength="43" lengthAdjust="spacingAndGlyphs" >Supermercado</text>
<rect x="326.8" y="311.2" width="2.7" height="2.7" fill="#ed7d31" />
<text x="331.5" y="314.5" font-size="7.85" fill="#595959" stroke="#595959" stroke-width="0.2" textLength="14.5" lengthAdjust="spacingAndGlyphs" >Casa</text>
<rect x="353.2" y="311.2" width="2.7" height="2.7" fill="#a5a5a5" />
<text x="358" y="314.5" font-size="7.85" fill="#595959" stroke="#595959" stroke-width="0.2" textLength="19.5" lengthAdjust="spacingAndGlyphs" >Saúde</text>
<circle cx="207" cy="153.5" r="2.2" fill="#fff" stroke="#aaa" stroke-width="0.7"/>
<circle cx="207" cy="326" r="2.2" fill="#fff" stroke="#aaa" stroke-width="0.7"/>
<circle cx="350.2" cy="326" r="2.2" fill="#fff" stroke="#aaa" stroke-width="0.7"/>
<circle cx="350.2" cy="153.5" r="2.2" fill="#fff" stroke="#aaa" stroke-width="0.7"/>
<circle cx="207" cy="239.8" r="2.2" fill="#fff" stroke="#aaa" stroke-width="0.7"/>
</g>
<line x1="467" y1="126.4" x2="467" y2="377" stroke="#d4d4d4" stroke-width="0.9" />
<rect x="467.5" y="114.5" width="11" height="263" fill="#fff" />
<rect x="468.4" y="116.5" width="9.6" height="260" fill="#fff" stroke="#d4d4d4" stroke-width="0.7"/>
<line x1="468.4" y1="125.3" x2="478" y2="125.3" stroke="#d4d4d4" stroke-width="0.7" />
<path d="M471,122 l2.2,-2.2 l2.2,2.2z" fill="#444" />
<line x1="479.4" y1="114" x2="479.4" y2="394" stroke="#d4d4d4" stroke-width="0.8" />
<rect x="480" y="109.5" width="168.5" height="284" fill="#fff" />
<text x="488.5" y="135.1" font-size="12.79" fill="#2f7d50" textLength="129.2" lengthAdjust="spacingAndGlyphs" >Formatar Ponto de Da...</text>
<path d="M625.5,127.8 h5 l-2.5,2.2z" fill="#444" />
<path d="M635.6,126.2 l5.5,5.4 M641.1,126.2 l-5.5,5.4" fill="none" stroke="#444" stroke-width="1.1" />
<text x="491" y="152.5" font-size="8.58" fill="#217346" font-weight="700" textLength="57.5" lengthAdjust="spacingAndGlyphs" >OPÇÕES DE SÉRIE</text>
<path d="M553,148.2 h5 l-2.5,2.8z" fill="#555" />
<path d="M491.5,169.2 l5.6,-5.8 l5.6,5.8 l-5.6,6.2 z" fill="none" stroke="#444" stroke-width="1" />
<path d="M495.6,165 v-2.4 a1.3,1.3 0 0 1 2.6,0 v3" fill="none" stroke="#444" stroke-width="0.8" />
<path d="M501.5,166.5 q3.5,1.5 3.5,6 q0,1.5 -1,2.5" fill="none" stroke="#444" stroke-width="1.1" />
<path d="M521.8,162.8 l6,4.4 l-2.3,6.8 h-7.4 l-2.3,-6.8 z" fill="none" stroke="#555" stroke-width="1" />
<path d="M517,175.5 l1,-1.5 M526.5,175.5 l-1,-1.5" fill="none" stroke="#777" stroke-width="0.9" />
<rect x="539.1" y="166.5" width="3.1" height="9" fill="#217346" />
<rect x="542.9" y="162.8" width="3.1" height="12.7" fill="#217346" />
<rect x="546.6" y="165" width="2.8" height="10.5" fill="#217346" />
<rect x="549.8" y="165.4" width="2.4" height="10.1" fill="#217346" />
<path d="M488,186.8 H541.5 L545,182.8 L548.5,186.8 H648" fill="none" stroke="#d4d4d4" stroke-width="0.9" />
<text x="520.3" y="198.8" font-size="8.43" fill="#217346" font-weight="700" textLength="37.9" lengthAdjust="spacingAndGlyphs" >ES DE SÉRIE</text>
<text x="521.5" y="211.5" font-size="8.14" fill="#444" stroke="#444" stroke-width="0.2" textLength="24.5" lengthAdjust="spacingAndGlyphs" >Série no</text>
<circle cx="510" cy="226.5" r="3.2" fill="#fff" stroke="#c8c8c8" stroke-width="0.7"/><circle cx="510" cy="226.5" r="1.3" fill="#aaa"/>
<text x="517.8" y="229.5" font-size="8.14" fill="#b2b2b2" stroke="#b2b2b2" stroke-width="0.2" textLength="42" lengthAdjust="spacingAndGlyphs" >Eixo Principal</text>
<circle cx="510" cy="239" r="3.2" fill="#fff" stroke="#c8c8c8" stroke-width="0.7"/>
<text x="517.8" y="241.9" font-size="8.14" fill="#b2b2b2" stroke="#b2b2b2" stroke-width="0.2" textLength="50" lengthAdjust="spacingAndGlyphs" >Eixo Secundário</text>
<text x="505.7" y="256.5" font-size="8.43" fill="#444" stroke="#444" stroke-width="0.2" textLength="71.3" lengthAdjust="spacingAndGlyphs" >ngulo da primeira fatia</text>
<line x1="505" y1="264.2" x2="582" y2="264.2" stroke="#c6c6c6" stroke-width="0.8" />
<rect x="505.2" y="261.5" width="1.6" height="5.5" fill="#444" />
<rect x="585" y="258.6" width="44.2" height="11.4" fill="#fff" stroke="#bdbdbd" stroke-width="0.8"/>
<text x="589.3" y="266.8" font-size="7.85" fill="#222" stroke="#222" stroke-width="0.2" textLength="6.6" lengthAdjust="spacingAndGlyphs" >0°</text>
<path d="M622.4,262.6 l1.5,-1.6 l1.5,1.6z M622.4,266.6 h3 l-1.5,1.6z" fill="#444" />
<text x="505.7" y="282.4" font-size="8.43" fill="#444" stroke="#444" stroke-width="0.2" textLength="53.3" lengthAdjust="spacingAndGlyphs" >plosão de Ponto</text>
<line x1="505" y1="289.8" x2="582" y2="289.8" stroke="#c6c6c6" stroke-width="0.8" />
<rect x="505.2" y="287.1" width="1.6" height="5.5" fill="#444" />
<rect x="585" y="284.3" width="44.2" height="12.2" fill="#fff" stroke="#bdbdbd" stroke-width="0.8"/>
<text x="589.3" y="292.8" font-size="7.85" fill="#222" stroke="#222" stroke-width="0.2" textLength="8.6" lengthAdjust="spacingAndGlyphs" >0%</text>
<path d="M622.4,288 l1.5,-1.6 l1.5,1.6z M622.4,292.3 h3 l-1.5,1.6z" fill="#444" />
<rect x="1" y="377" width="466" height="16.5" fill="#f3f3f3" />
<line x1="1" y1="377.2" x2="467" y2="377.2" stroke="#d4d4d4" stroke-width="0.6" />
<path d="M19.5,383 l-2,2 l2,2z" fill="#bbb" />
<path d="M34.5,383 l2,2 l-2,2z" fill="#bbb" />
<rect x="60.7" y="377.2" width="34" height="16" fill="#fff" stroke="#d0d0d0" stroke-width="0.5"/>
<text x="67.8" y="388.4" font-size="8.43" fill="#217346" font-weight="700" textLength="19.5" lengthAdjust="spacingAndGlyphs" >Plan1</text>
<line x1="61" y1="391.5" x2="94.5" y2="391.5" stroke="#217346" stroke-width="1.5" />
<circle cx="119" cy="385.2" r="4.2" fill="none" stroke="#777" stroke-width="0.8"/>
<path d="M119,383 v4.4 M116.8,385.2 h4.4" fill="none" stroke="#555" stroke-width="0.9" />
<rect x="288.3" y="382.5" width="0.9" height="0.9" fill="#888" />
<rect x="288.3" y="385" width="0.9" height="0.9" fill="#888" />
<rect x="288.3" y="387.5" width="0.9" height="0.9" fill="#888" />
<rect x="298.3" y="381.7" width="170" height="9.2" fill="#fff" stroke="#bdbdbd" stroke-width="0.7"/>
<line x1="306" y1="381.7" x2="306" y2="390.9" stroke="#bdbdbd" stroke-width="0.6" />
<path d="M303.8,384 l-2.4,2.3 l2.4,2.3z" fill="#444" />
<rect x="0" y="393.8" width="650" height="14.2" fill="#217346" />
<text x="5.3" y="403.3" font-size="7.56" fill="#fff" stroke="#fff" stroke-width="0.2" textLength="25.8" lengthAdjust="spacingAndGlyphs" >PRONTO</text>
<rect x="521" y="396.5" width="8.5" height="7.5" fill="none" stroke="#fff" stroke-width="0.8"/>
<rect x="523.5" y="397" width="3.5" height="3.5" fill="#fff" />
<rect x="539.3" y="399.6" width="3" height="1.4" fill="#fff" />
<line x1="545.5" y1="400.3" x2="604.3" y2="400.3" stroke="#fff" stroke-width="0.6" />
<rect x="573.8" y="396.8" width="2.2" height="7" fill="#fff" />
<path d="M607.8,400.3 h5 M610.3,397.8 v5" fill="none" stroke="#fff" stroke-width="1.3" />
<text x="622.3" y="403.6" font-size="7.70" fill="#fff" stroke="#fff" stroke-width="0.2" textLength="16" lengthAdjust="spacingAndGlyphs" >100%</text>
<defs><filter id="sh" x="-10%" y="-10%" width="130%" height="130%"><feDropShadow dx="1" dy="1" stdDeviation="1" flood-color="#000" flood-opacity="0.18"/></filter></defs>
<rect x="369.8" y="187.3" width="150.4" height="35.4" fill="#fff" stroke="#c6c6c6" stroke-width="0.8" filter="url(#sh)"/>
<rect x="371.4" y="189.8" width="52" height="33" fill="#a0d6b4" />
<path d="M392,197.8 L397,192.6 L402.6,197.2 L397.8,202.3 Z" fill="#fff" stroke="#3a3a3a" stroke-width="0.8" />
<path d="M395.2,194.6 V192.3 a1.6,1.6 0 0 1 3.2,0 V195" fill="none" stroke="#555" stroke-width="0.7" />
<path d="M402.3,196.8 q1.6,0.6 1.6,3.2 v1.2" fill="none" stroke="#3e7ec8" stroke-width="1.4" />
<rect x="390" y="202.8" width="13.8" height="2.9" fill="#1e2f4f" />
<path d="M405.3,197.5 h2.5 l-1.25,1.4z" fill="#333" />
<text x="373.8" y="216.2" font-size="8.14" fill="#666" stroke="#666" stroke-width="0.2" textLength="45.9" lengthAdjust="spacingAndGlyphs" >Preenchimento</text>
<path d="M443,193 h-8.4 v8.5 h1.5" fill="none" stroke="#7a7a7a" stroke-width="0.8" />
<path d="M445.5,193.5 l-8.5,8.5" fill="none" stroke="#3e7ec8" stroke-width="1.6" />
<rect x="434.6" y="202.8" width="14.4" height="2.6" fill="#3e7ec8" />
<path d="M450.3,197.5 h2.5 l-1.25,1.4z" fill="#333" />
<text x="428.5" y="212.3" font-size="8.14" fill="#666" stroke="#666" stroke-width="0.2" textLength="27.2" lengthAdjust="spacingAndGlyphs" >Estrutura</text>
<text x="425.4" y="219.7" font-size="8.14" fill="#666" stroke="#666" stroke-width="0.2" textLength="32.8" lengthAdjust="spacingAndGlyphs" >de Tópicos</text>
<rect x="461.3" y="199.1" width="56.7" height="13.5" fill="#fff" stroke="#a9a9a9" stroke-width="0.8"/>
<text x="463.1" y="207.6" font-size="8.14" fill="#222" stroke="#222" stroke-width="0.2" textLength="47.5" lengthAdjust="spacingAndGlyphs" >Série "Valor" Pc</text>
<path d="M513.2,205 h2.8 l-1.4,1.5z" fill="#333" />
<rect x="371.8" y="223.5" width="133.5" height="190" fill="#fff" stroke="#c6c6c6" stroke-width="0.8" filter="url(#sh)"/>
<rect x="375.5" y="226.6" width="8.5" height="8.8" fill="#fff" stroke="#dadada" stroke-width="0.7"/>
<text x="392.1" y="233.6" font-size="8.14" fill="#333" stroke="#333" stroke-width="0.2" textLength="37" lengthAdjust="spacingAndGlyphs" >Automático</text>
<rect x="372.3" y="237.6" width="132.5" height="13.3" fill="#eeeeee" />
<text x="378" y="248.3" font-size="8.43" fill="#555" font-weight="700" textLength="48" lengthAdjust="spacingAndGlyphs" >Cores do Tema</text>
<rect x="374.40" y="253.5" width="6.7" height="6.7" fill="#ffffff" stroke="#e0e0e0" stroke-width="0.5"/>
<rect x="374.40" y="263.90" width="6.7" height="7.6" fill="#f2f2f2" />
<rect x="374.40" y="271.44" width="6.7" height="7.6" fill="#d9d9d9" />
<rect x="374.40" y="278.98" width="6.7" height="7.6" fill="#bfbfbf" />
<rect x="374.40" y="286.52" width="6.7" height="7.6" fill="#a6a6a6" />
<rect x="374.40" y="294.06" width="6.7" height="7.6" fill="#808080" />
<rect x="374.40" y="319.4" width="6.7" height="6.8" fill="#c00000" />
<rect x="384.50" y="253.5" width="6.7" height="6.7" fill="#000000" />
<rect x="384.50" y="263.90" width="6.7" height="7.6" fill="#7f7f7f" />
<rect x="384.50" y="271.44" width="6.7" height="7.6" fill="#595959" />
<rect x="384.50" y="278.98" width="6.7" height="7.6" fill="#404040" />
<rect x="384.50" y="286.52" width="6.7" height="7.6" fill="#262626" />
<rect x="384.50" y="294.06" width="6.7" height="7.6" fill="#0d0d0d" />
<rect x="384.50" y="319.4" width="6.7" height="6.8" fill="#ff0000" />
<rect x="394.60" y="253.5" width="6.7" height="6.7" fill="#e7e6e6" />
<rect x="394.60" y="263.90" width="6.7" height="7.6" fill="#d0cece" />
<rect x="394.60" y="271.44" width="6.7" height="7.6" fill="#aeabab" />
<rect x="394.60" y="278.98" width="6.7" height="7.6" fill="#757171" />
<rect x="394.60" y="286.52" width="6.7" height="7.6" fill="#3a3838" />
<rect x="394.60" y="294.06" width="6.7" height="7.6" fill="#171616" />
<rect x="394.60" y="319.4" width="6.7" height="6.8" fill="#ffc000" />
<rect x="404.70" y="253.5" width="6.7" height="6.7" fill="#44546a" />
<rect x="404.70" y="263.90" width="6.7" height="7.6" fill="#d6dce5" />
<rect x="404.70" y="271.44" width="6.7" height="7.6" fill="#adb9ca" />
<rect x="404.70" y="278.98" width="6.7" height="7.6" fill="#8497b0" />
<rect x="404.70" y="286.52" width="6.7" height="7.6" fill="#333f50" />
<rect x="404.70" y="294.06" width="6.7" height="7.6" fill="#222a35" />
<rect x="404.70" y="319.4" width="6.7" height="6.8" fill="#ffff00" />
<rect x="414.80" y="253.5" width="6.7" height="6.7" fill="#5b9bd5" />
<rect x="414.80" y="263.90" width="6.7" height="7.6" fill="#deebf7" />
<rect x="414.80" y="271.44" width="6.7" height="7.6" fill="#bdd7ee" />
<rect x="414.80" y="278.98" width="6.7" height="7.6" fill="#9dc3e6" />
<rect x="414.80" y="286.52" width="6.7" height="7.6" fill="#2e75b6" />
<rect x="414.80" y="294.06" width="6.7" height="7.6" fill="#1f4e79" />
<rect x="414.80" y="319.4" width="6.7" height="6.8" fill="#92d050" />
<rect x="424.90" y="253.5" width="6.7" height="6.7" fill="#ed7d31" />
<rect x="424.90" y="263.90" width="6.7" height="7.6" fill="#fbe5d6" />
<rect x="424.90" y="271.44" width="6.7" height="7.6" fill="#f8cbad" />
<rect x="424.90" y="278.98" width="6.7" height="7.6" fill="#f4b183" />
<rect x="424.90" y="286.52" width="6.7" height="7.6" fill="#c55a11" />
<rect x="424.90" y="294.06" width="6.7" height="7.6" fill="#843c0c" />
<rect x="424.90" y="319.4" width="6.7" height="6.8" fill="#00b050" />
<rect x="435.00" y="253.5" width="6.7" height="6.7" fill="#a5a5a5" />
<rect x="435.00" y="263.90" width="6.7" height="7.6" fill="#ededed" />
<rect x="435.00" y="271.44" width="6.7" height="7.6" fill="#dbdbdb" />
<rect x="435.00" y="278.98" width="6.7" height="7.6" fill="#c9c9c9" />
<rect x="435.00" y="286.52" width="6.7" height="7.6" fill="#7b7b7b" />
<rect x="435.00" y="294.06" width="6.7" height="7.6" fill="#525252" />
<rect x="435.00" y="319.4" width="6.7" height="6.8" fill="#00b0f0" />
<rect x="445.10" y="253.5" width="6.7" height="6.7" fill="#ffc000" />
<rect x="445.10" y="263.90" width="6.7" height="7.6" fill="#fff2cc" />
<rect x="445.10" y="271.44" width="6.7" height="7.6" fill="#ffe699" />
<rect x="445.10" y="278.98" width="6.7" height="7.6" fill="#ffd966" />
<rect x="445.10" y="286.52" width="6.7" height="7.6" fill="#bf9000" />
<rect x="445.10" y="294.06" width="6.7" height="7.6" fill="#7f6000" />
<rect x="445.10" y="319.4" width="6.7" height="6.8" fill="#0070c0" />
<rect x="455.20" y="253.5" width="6.7" height="6.7" fill="#4472c4" />
<rect x="455.20" y="263.90" width="6.7" height="7.6" fill="#dae3f3" />
<rect x="455.20" y="271.44" width="6.7" height="7.6" fill="#b4c7e7" />
<rect x="455.20" y="278.98" width="6.7" height="7.6" fill="#8faadc" />
<rect x="455.20" y="286.52" width="6.7" height="7.6" fill="#2f5597" />
<rect x="455.20" y="294.06" width="6.7" height="7.6" fill="#203864" />
<rect x="455.20" y="319.4" width="6.7" height="6.8" fill="#002060" />
<rect x="465.30" y="253.5" width="6.7" height="6.7" fill="#70ad47" />
<rect x="465.30" y="263.90" width="6.7" height="7.6" fill="#e2f0d9" />
<rect x="465.30" y="271.44" width="6.7" height="7.6" fill="#c5e0b4" />
<rect x="465.30" y="278.98" width="6.7" height="7.6" fill="#a9d18e" />
<rect x="465.30" y="286.52" width="6.7" height="7.6" fill="#548235" />
<rect x="465.30" y="294.06" width="6.7" height="7.6" fill="#385723" />
<rect x="465.30" y="319.4" width="6.7" height="6.8" fill="#7030a0" />
<rect x="372.3" y="304.4" width="132.5" height="13" fill="#eeeeee" />
<text x="377.6" y="313.6" font-size="8.43" fill="#555" font-weight="700" textLength="42.7" lengthAdjust="spacingAndGlyphs" >Cores Padrão</text>
<rect x="372.3" y="328.6" width="132.5" height="13.1" fill="#eeeeee" />
<text x="378" y="337.7" font-size="8.43" fill="#555" font-weight="700" textLength="51" lengthAdjust="spacingAndGlyphs" >Cores Recentes</text>
<rect x="374.3" y="343.4" width="6.7" height="6.6" fill="#cbbba0" />
<rect x="375.3" y="354.5" width="9.3" height="9.3" fill="#fff" stroke="#dadada" stroke-width="0.7"/>
<text x="391.5" y="361.4" font-size="8.14" fill="#333" stroke="#333" stroke-width="0.2" textLength="64" lengthAdjust="spacingAndGlyphs" >Sem Preenchimento</text>
<line x1="371.8" y1="366.3" x2="505.3" y2="366.3" stroke="#d8d8d8" stroke-width="0.8" />
<path d="M379,375.2 L380.57,370.88 A4.6,4.6 0 0 1 383.53,374.40 Z" fill="#5b9bd5" stroke="#fff" stroke-width="0.3" stroke-linejoin="round"/>
<path d="M379,375.2 L383.53,374.40 A4.6,4.6 0 0 1 381.96,378.72 Z" fill="#70ad47" stroke="#fff" stroke-width="0.3" stroke-linejoin="round"/>
<path d="M379,375.2 L381.96,378.72 A4.6,4.6 0 0 1 377.43,379.52 Z" fill="#ffc000" stroke="#fff" stroke-width="0.3" stroke-linejoin="round"/>
<path d="M379,375.2 L377.43,379.52 A4.6,4.6 0 0 1 374.47,376.00 Z" fill="#ed7d31" stroke="#fff" stroke-width="0.3" stroke-linejoin="round"/>
<path d="M379,375.2 L374.47,376.00 A4.6,4.6 0 0 1 376.04,371.68 Z" fill="#c00000" stroke="#fff" stroke-width="0.3" stroke-linejoin="round"/>
<path d="M379,375.2 L376.04,371.68 A4.6,4.6 0 0 1 380.57,370.88 Z" fill="#4472c4" stroke="#fff" stroke-width="0.3" stroke-linejoin="round"/>
<circle cx="379" cy="375.2" r="1.6" fill="#fff"/>
<text x="391.5" y="376.6" font-size="8.14" fill="#333" stroke="#333" stroke-width="0.2" textLength="99.5" lengthAdjust="spacingAndGlyphs" >Mais Cores de Preenchimento...</text>
<rect x="374.6" y="384.6" width="9" height="8.6" fill="#e8eef7" stroke="#6c8ebf" stroke-width="0.8"/>
<path d="M375.5,392.5 l3,-3.5 l2,2 l1.5,-1.5 l1.5,3z" fill="#3e7ec8" />
<circle cx="381.5" cy="387" r="0.9" fill="#f2c55c"/>
<text x="391.2" y="391" font-size="8.14" fill="#333" stroke="#333" stroke-width="0.2" textLength="31.5" lengthAdjust="spacingAndGlyphs" >Imagem...</text>
<defs><linearGradient id="gg" x1="0" y1="0" x2="1" y2="1"><stop offset="0" stop-color="#f4f4f4"/><stop offset="1" stop-color="#8a8a8a"/></linearGradient></defs>
<rect x="374.6" y="398.5" width="9" height="9.5" fill="url(#gg)" stroke="#888" stroke-width="0.7"/>
<text x="391.2" y="405" font-size="8.14" fill="#333" stroke="#333" stroke-width="0.2" textLength="30.5" lengthAdjust="spacingAndGlyphs" >Gradiente</text>
<path d="M497.3,401.8 l2.3,2.2 l-2.3,2.2z" fill="#444" />
<line x1="392.2" y1="234.6" x2="396.8" y2="234.6" stroke="#444" stroke-width="0.6" />
<line x1="395.6" y1="362.8" x2="399.6" y2="362.8" stroke="#444" stroke-width="0.6" />
<line x1="391.6" y1="378" x2="397" y2="378" stroke="#444" stroke-width="0.6" />
<line x1="407.6" y1="392.6" x2="411.6" y2="392.6" stroke="#444" stroke-width="0.6" />
<line x1="391.4" y1="406.4" x2="396.2" y2="406.4" stroke="#444" stroke-width="0.6" />
<ellipse cx="396.25" cy="202.55" rx="31" ry="22" fill="none" stroke="#ec1c24" stroke-width="2.5"/>
</svg></body></html>
